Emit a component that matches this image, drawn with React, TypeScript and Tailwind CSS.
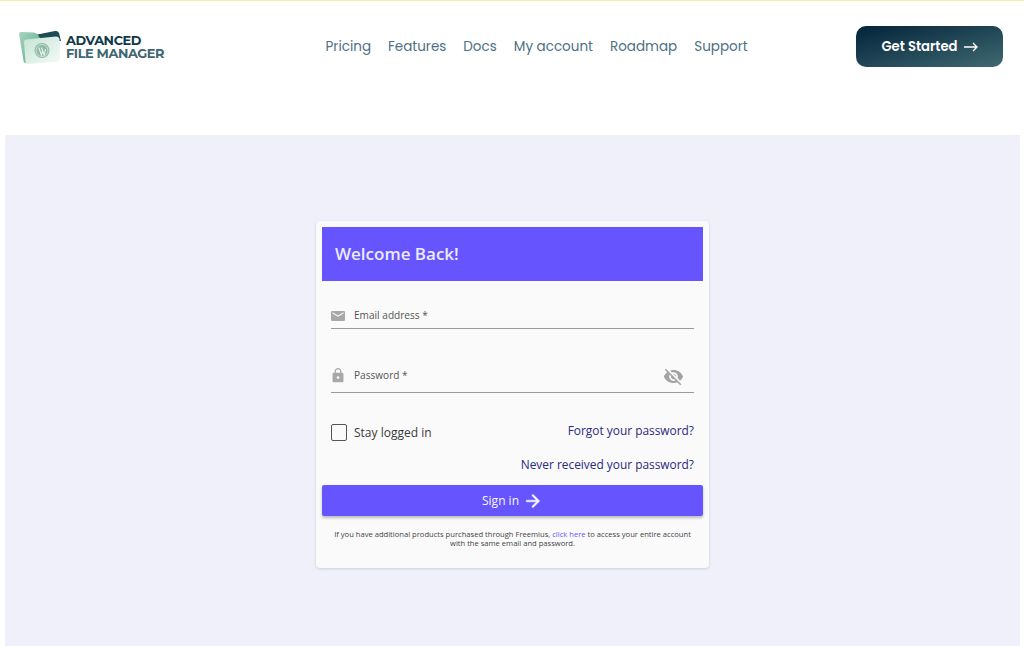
function Logo() {
  return (
    <div className="flex items-center gap-[3px]">
      <svg width="45" height="36" viewBox="0 0 45 36">
        <defs>
          <linearGradient id="folderBack" x1="0" y1="0" x2="1" y2="1">
            <stop offset="0" stopColor="#a5d6bf" />
            <stop offset="1" stopColor="#5ea98a" />
          </linearGradient>
          <linearGradient id="folderFront" x1="0" y1="0" x2="1" y2="1">
            <stop offset="0" stopColor="#c4e4d4" />
            <stop offset="1" stopColor="#f5fbf8" />
          </linearGradient>
        </defs>
        <path d="M17 6 L37 2 Q40 1.5 41 4 L43 12 L20 12 Z" fill="#1c4a55" />
        <path d="M1 5 Q1 3 3 3 L16 3.5 Q19 4 20 6 L22 9 L8 34 Q6 34.5 5.5 32 Z" fill="url(#folderBack)" />
        <path d="M6 13 Q6 10.5 8 10.5 L38 7.5 Q41 7.5 41.5 10 L42 29 Q42 32 40 32.5 L10 35 Q8 35 7.5 33 Z" fill="url(#folderFront)" />
        <circle cx="24" cy="21.5" r="7.5" fill="#8db9a5" />
        <circle cx="24" cy="21.5" r="6" fill="none" stroke="#e6f3ec" strokeWidth="0.7" />
        <path d="M20.8 18.5 L23.4 26 L24.8 21.5 M23.4 18.5 L26.2 26 L27.6 20" fill="none" stroke="#e6f3ec" strokeWidth="1.1" />
      </svg>
      <div className="font-['Montserrat','Open_Sans',sans-serif] text-[12.9px] leading-[13px] font-bold tracking-[-0.4px]">
        <div className="text-[#12394a]">ADVANCED</div>
        <div className="text-[#3f6672]">FILE MANAGER</div>
      </div>
    </div>
  )
}

function Header() {
  const links = ['Pricing', 'Features', 'Docs', 'My account', 'Roadmap', 'Support']
  return (
    <header className="h-[134px] flex items-start justify-between pl-[18px] pr-[21px] pt-[25px] font-['Poppins','Inter',sans-serif]">
      <div className="pt-[3px]">
        <Logo />
      </div>
      <nav className="flex gap-[17px] pt-[12px] ml-[53px] text-[13.5px] leading-[18px] text-[#4d7083]">
        {links.map((l) => (
          <a key={l}>{l}</a>
        ))}
      </nav>
      <a className="w-[147px] h-[41px] flex items-center justify-center gap-[6px] pt-[1px] rounded-[10px] bg-gradient-to-br from-[#04243a] to-[#3f6a72] text-white text-[13.2px] font-semibold">
        Get Started
        <svg width="14" height="10" viewBox="0 0 14 10" fill="none" stroke="currentColor" strokeWidth="1.4">
          <path d="M0 5 H13 M9 1 L13 5 L9 9" />
        </svg>
      </a>
    </header>
  )
}

function MailIcon() {
  return (
    <svg width="14" height="10" viewBox="2 4 20 16" fill="#a8a8a8" preserveAspectRatio="none" className="-mt-[2px]">
      <path d="M20 4H4c-1.1 0-2 .9-2 2v12c0 1.1.9 2 2 2h16c1.1 0 2-.9 2-2V6c0-1.1-.9-2-2-2zm0 4l-8 5-8-5V6l8 5 8-5v2z" />
    </svg>
  )
}

function LockIcon() {
  return (
    <svg width="14" height="15" viewBox="3 1 18 22" fill="#a8a8a8" className="-mt-[1px]">
      <path d="M18 8h-1V6c0-2.76-2.24-5-5-5S7 3.24 7 6v2H6c-1.1 0-2 .9-2 2v10c0 1.1.9 2 2 2h12c1.1 0 2-.9 2-2V10c0-1.1-.9-2-2-2zm-6 9c-1.1 0-2-.9-2-2s.9-2 2-2 2 .9 2 2-.9 2-2 2zm3.1-9H8.9V6c0-1.71 1.39-3.1 3.1-3.1 1.71 0 3.1 1.39 3.1 3.1v2z" />
    </svg>
  )
}

function EyeOff() {
  return (
    <svg width="21" height="21" viewBox="0 0 24 24" fill="#a3a3a3">
      <path d="M12 7c2.76 0 5 2.24 5 5 0 .65-.13 1.26-.36 1.83l2.92 2.92c1.51-1.26 2.7-2.89 3.43-4.75-1.73-4.39-6-7.5-11-7.5-1.4 0-2.74.25-3.98.7l2.16 2.16C10.74 7.13 11.35 7 12 7zM2 4.27l2.28 2.28.46.46C3.08 8.3 1.78 10.02 1 12c1.73 4.39 6 7.5 11 7.5 1.55 0 3.03-.3 4.38-.84l.42.42L19.73 22 21 20.73 3.27 3 2 4.27zM7.53 9.8l1.55 1.55c-.05.21-.08.43-.08.65 0 1.66 1.34 3 3 3 .22 0 .44-.03.65-.08l1.55 1.55c-.67.33-1.41.53-2.2.53-2.76 0-5-2.24-5-5 0-.79.2-1.53.53-2.2zm4.31-.78l3.15 3.15.02-.16c0-1.66-1.34-3-3-3l-.17.01z" />
    </svg>
  )
}

function ArrowForward() {
  return (
    <svg width="20" height="20" viewBox="0 0 24 24" fill="currentColor" stroke="currentColor" strokeWidth="0.6">
      <path d="M12 4l-1.41 1.41L16.17 11H4v2h12.17l-5.58 5.59L12 20l8-8z" />
    </svg>
  )
}

function LoginCard() {
  return (
    <div className="w-[393px] h-[347px] bg-[#fafafa] rounded-[4px] p-[6px] shadow-[0_1px_3px_rgba(0,0,0,0.15)] font-['Open_Sans',sans-serif]">
      <div className="h-[54px] bg-[#6655ff] flex items-center pl-[13px] text-[17px] font-semibold text-[#ecebff]">
        Welcome Back!
      </div>
      <div className="px-[9px]">
        <div className="h-[48px] pt-[25px] flex items-center gap-[9px] border-b border-[#9b9b9b] text-[10.1px] text-[#555555]">
          <MailIcon />
          <span className="-mt-[2px]">Email address *</span>
        </div>
        <div className="h-[64px] pt-[31px] flex items-center border-b border-[#9b9b9b] text-[10.1px] text-[#555555]">
          <LockIcon />
          <span className="flex-1 ml-[9px] -mt-[1px]">Password *</span>
          <span className="mr-[10px]">
            <EyeOff />
          </span>
        </div>
        <div className="flex justify-between mt-[30px] items-start">
          <label className="flex items-center gap-[7px] text-[12px] text-[#3a3a3a]">
            <span className="w-[16px] h-[17px] border border-[#555555] rounded-[2px]" />
            <span className="mt-[1px]">Stay logged in</span>
          </label>
          <a className="text-[11.9px] leading-[16px] -mt-[1px] text-[#2c2a7d]">Forgot your password?</a>
        </div>
        <div className="text-right mt-[14px] text-[11.9px] leading-[16px] text-[#2c2a7d]">Never received your password?</div>
      </div>
      <button className="w-full h-[31px] mt-[13px] flex items-center justify-center gap-[4px] rounded-[2px] bg-[#6655ff] text-[#f8f7ff] text-[12px] shadow-[0_2px_3px_rgba(0,0,0,0.25)]">
        Sign in
        <ArrowForward />
      </button>
      <p className="mt-[14px] text-center text-[7.6px] leading-[9px] text-[#444444]">
        If you have additional products purchased through Freemius, <a className="text-[#6655ff]">click here</a> to access your entire account
        <br />
        with the same email and password.
      </p>
    </div>
  )
}

export default function App() {
  return (
    <div className="h-[646px] overflow-hidden bg-white">
      <div className="h-px bg-[#fde9a8]" />
      <Header />
      <main className="ml-[5px] mr-[4px] h-[511px] bg-[#f0f0fa] pt-[86px] pl-[311px]">
        <LoginCard />
      </main>
    </div>
  )
}
